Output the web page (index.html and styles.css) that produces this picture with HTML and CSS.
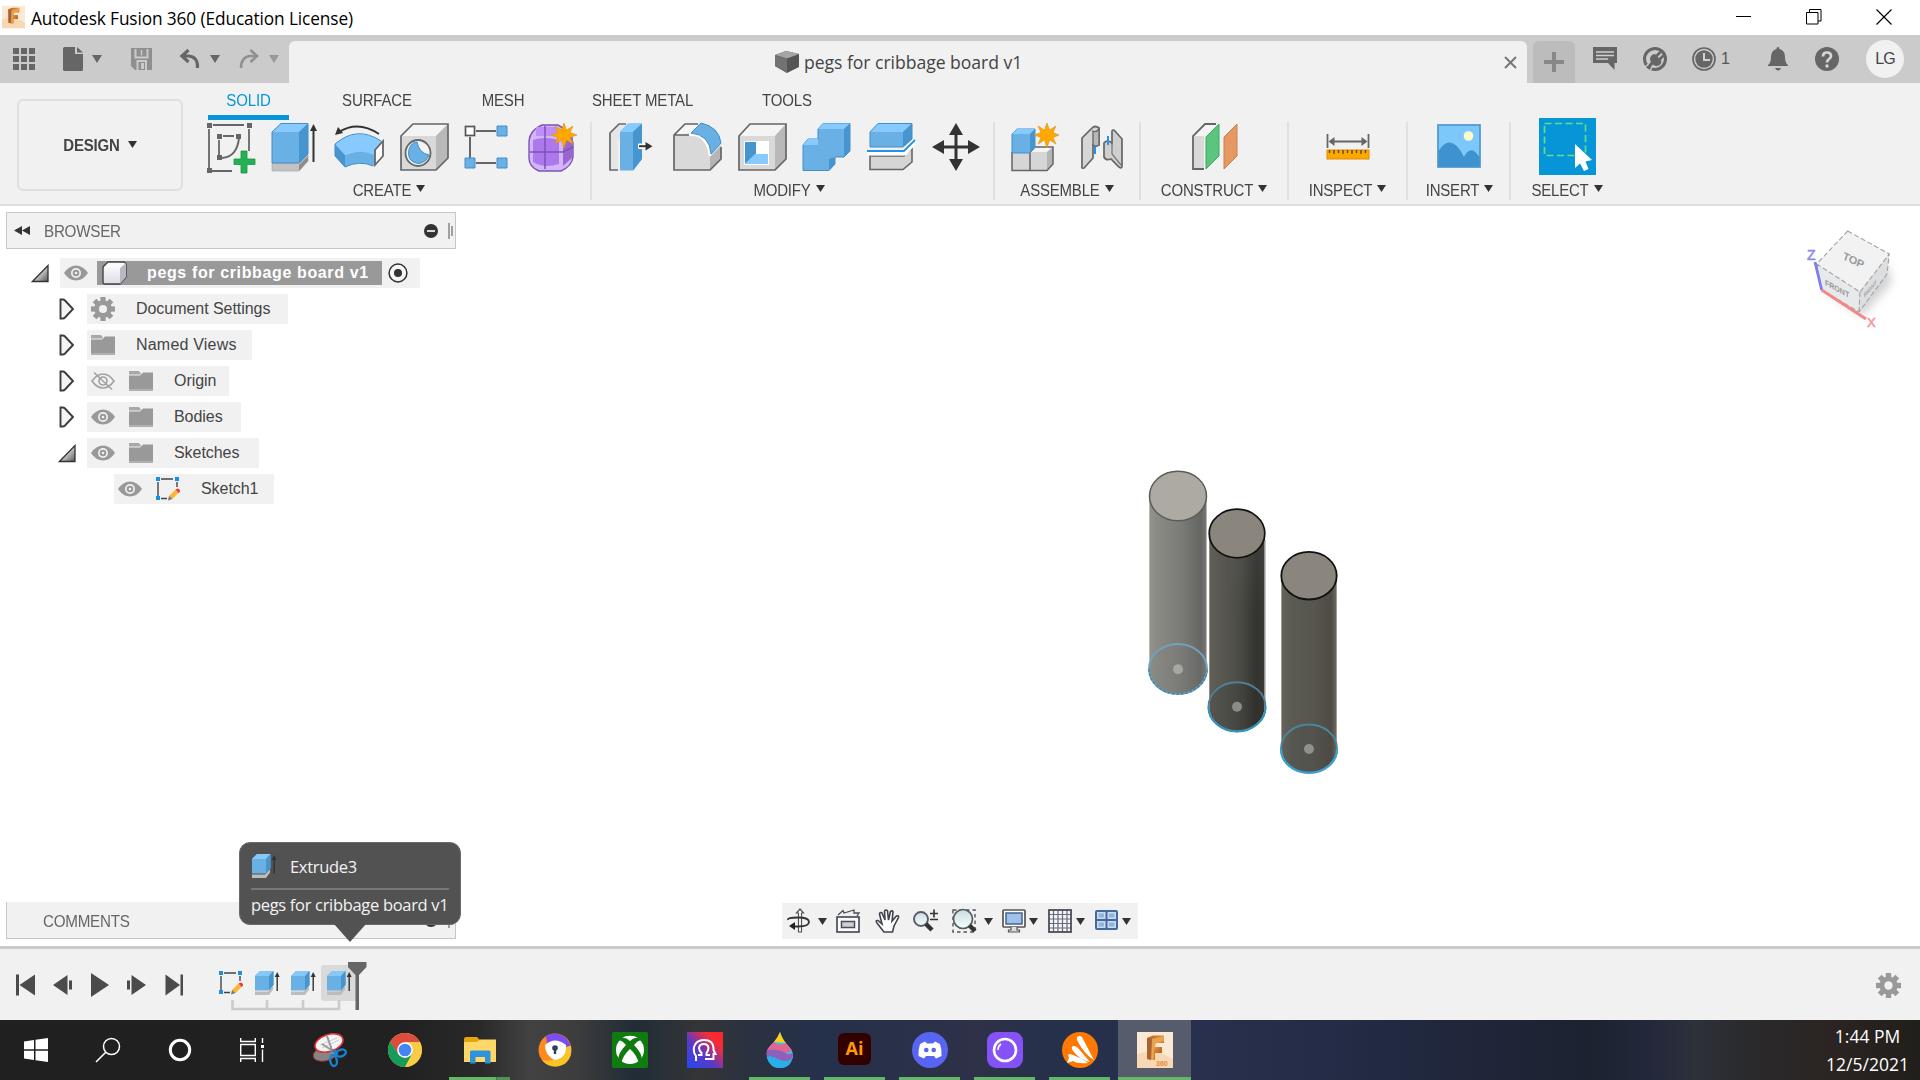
FILE: index.html
```html
<!DOCTYPE html>
<html lang="en">
<head>
<meta charset="utf-8">
<title>Autodesk Fusion 360 (Education License)</title>
<link rel="stylesheet" href="styles.css">
</head>
<body>
<svg class="defs" width="0" height="0" aria-hidden="true">
  <defs>
    <linearGradient id="g-tri" x1="0" y1="0" x2="1" y2="1"><stop offset=".3" stop-color="#f5f5f5"/><stop offset="1" stop-color="#555"/></linearGradient>
    <linearGradient id="g-cube" x1="0" y1="0" x2="0" y2="1"><stop offset="0" stop-color="#fff"/><stop offset="1" stop-color="#dddee4"/></linearGradient>
    <linearGradient id="g-lens" x1="0" y1="0" x2="0" y2="1"><stop offset="0" stop-color="#c9dde0"/><stop offset="1" stop-color="#f8fcfc"/></linearGradient>
    <linearGradient id="g-f" x1="0" y1="0" x2="1" y2="1"><stop offset="0" stop-color="#b4611f"/><stop offset=".5" stop-color="#e08a35"/><stop offset="1" stop-color="#8a4a1c"/></linearGradient>
  </defs>
  <symbol id="caret" viewBox="0 0 10 8" preserveAspectRatio="none"><path d="M0 0H10L5 8Z" fill="currentColor"/></symbol>
  <symbol id="eye" viewBox="0 0 24 16"><path d="M0 8Q5 .5 12 .5T24 8Q19 15.500 12 15.500T0 8Z" fill="#999"/><circle cx="12" cy="8" r="5" fill="#f1f1f1"/><circle cx="12" cy="8" r="3.300" fill="#999"/><circle cx="12" cy="8" r="1.300" fill="#f1f1f1"/></symbol>
  <symbol id="eye-off" viewBox="0 0 24 20"><g fill="none" stroke="#a3a3a3" stroke-width="1.700"><path d="M1 10Q6 3 12 3T23 10Q18 17 12 17T1 10Z"/><circle cx="12" cy="10" r="4"/><path d="M3 1.500L21 18.500"/></g></symbol>
  <symbol id="folder" viewBox="0 0 24 20"><path d="M0 4.500H11L14 1.500H24V18H0Z" fill="#999"/><path d="M0 0H10L12 2.500L11 3.500H0Z" fill="#a8a8a8"/><path d="M0 18H24V20H0Z" fill="#b0b0b0"/></symbol>
  <symbol id="closed" viewBox="0 0 16 22"><path d="M1.500 1.500H4Q5 1.500 6 2.500L14 11L6 19.500Q5 20.500 4 20.500H1.500Z" fill="#f4f4f4" stroke="#3c3c3c" stroke-width="1.900"/></symbol>
  <symbol id="opened" viewBox="0 0 18 19"><path d="M17 1.500V17.500H1.500Z" fill="url(#g-tri)" stroke="#333" stroke-width="1.300"/></symbol>
  <symbol id="gear" viewBox="-12 -12 24 24"><g fill="#999"><g id="teeth"><rect x="-2.600" y="-12" width="5.200" height="24"/><rect x="-12" y="-2.600" width="24" height="5.200"/></g><use href="#teeth" transform="rotate(45)"/><circle r="8.700"/></g><circle r="4" fill="#f1f1f1"/></symbol>
  <symbol id="sketch" viewBox="0 0 24 24"><g stroke="#444" stroke-width="1.400"><path d="M5 2H17M2 5V19M5 21.500H11M21 5V10"/></g><g fill="#1a8fe3"><path d="M0 0H4V4H0ZM19 0H23V4H19ZM0 19H4V23H0Z"/></g><path d="M13 19L19.500 12.500L23 15.500L16.500 22Z" fill="#fbb733"/><path d="M19.500 12.500L22 11.500Q24.500 12.500 24 14.500L22.500 16Z" fill="#ee3844"/><path d="M13 19L16.500 22L12 23.500Z" fill="#777"/></symbol>
  <symbol id="extr" viewBox="0 0 25 24"><path d="M0 20.500H13L18 15V18.500L14 24H0Z" fill="#bcbcbc"/><path d="M0 5L5 0H18.500V14L13.500 19.500H0Z" fill="#69b0e4"/><path d="M0 5L5 0H18.500L14 5Z" fill="#86c8f8"/><path d="M14 5L18.500 0V14L14 19.500Z" fill="#4795cf"/><path d="M22.200 4V20" stroke="#333" stroke-width="1.400"/><path d="M19.700 6L22.200 1L24.700 6Z" fill="#333"/></symbol>
  <symbol id="fusion" viewBox="0 0 36 36"><rect width="36" height="36" fill="#fbe9d6"/><path d="M0 22L18 18L36 27V36H0Z" fill="#f7cfa5" opacity=".7"/><path d="M10 6L16 3.500H27V11H18V15H25V21H18V28L10 27Z" fill="url(#g-f)"/><path d="M10 6L15 7V28L10 27Z" fill="#a8642c"/><path d="M15 7L27 4V9L19 11L17 18V28H14Z" fill="#e9a34f"/></symbol>
  <symbol id="minus" viewBox="-8 -8 16 16"><circle r="7" fill="#333"/><path d="M-4 0H4" stroke="#eee" stroke-width="1.800"/></symbol>
</svg>

<header class="titlebar">
  <svg class="app-logo" width="23" height="24" viewBox="0 0 36 36"><use href="#fusion"/></svg>
  <span class="app-title">Autodesk Fusion 360 (Education License)</span>
  <div class="win-buttons">
    <svg width="16" height="16"><path d="M0 7.500H15" stroke="#000"/></svg>
    <svg width="16" height="16"><path d="M.5 3.500H12V15H.5ZM3.500 3.500V.5H15V12H12" fill="none" stroke="#000"/></svg>
    <svg width="16" height="16"><path d="M.5 .5L15.500 15.500M15.500 .5L.5 15.500" stroke="#000" stroke-width="1.200"/></svg>
  </div>
</header>

<div class="tabbar">
  <div class="quick">
    <svg width="22" height="22"><path d="M0 0H6V6H0ZM8 0H14V6H8ZM16 0H22V6H16ZM0 8H6V14H0ZM8 8H14V14H8ZM16 8H22V14H16ZM0 16H6V22H0ZM8 16H14V22H8ZM16 16H22V22H16Z" fill="#666"/></svg>
    <svg class="q-file" width="20" height="24"><path d="M0 1.500Q0 0 1.500 0H12V7H20V22.500Q20 24 18.500 24H1.500Q0 24 0 22.500ZM14 0L20 5.500H14Z" fill="#666"/></svg>
    <svg class="caret q-c1"><use href="#caret"/></svg>
    <svg class="q-save" width="21" height="22"><path d="M0 0H21V22H4L0 18Z" fill="#8f8f8f"/><path d="M4.500 1V9.500H16.500V1M6.500 22V13H15V22" fill="none" stroke="#cbcbcb" stroke-width="2"/><path d="M10 15H13V21H10Z" fill="#cbcbcb"/><path d="M10.500 2V7.500" stroke="#cbcbcb" stroke-width="1.500"/></svg>
    <svg class="q-undo" width="20" height="20"><path d="M8.500 1L2 7L8.500 13M2.500 7H9Q18 8 17.500 19" fill="none" stroke="#666" stroke-width="3.200"/></svg>
    <svg class="caret q-c2"><use href="#caret"/></svg>
    <svg class="q-redo" width="20" height="20"><path d="M11.500 1L18 7L11.500 13M17.500 7H11Q2 8 2 19" fill="none" stroke="#909090" stroke-width="2.600"/></svg>
    <svg class="caret q-c3"><use href="#caret"/></svg>
  </div>
  <div class="doc-tab">
    <svg width="24" height="24"><path d="M0 5L11 1L24 4V17L12 23L0 16Z" fill="#555"/><path d="M0 5L11 1L24 4L12 8.500Z" fill="#a5a5a5"/><path d="M0 5L12 8.500V23L0 16Z" fill="#727272"/></svg>
    <span>pegs for cribbage board v1</span>
    <svg class="tab-close" width="13" height="13"><path d="M1 1L12 12M12 1L1 12" stroke="#777" stroke-width="2"/></svg>
  </div>
  <div class="new-tab"><svg width="20" height="20"><path d="M0 10H20M10 0V20" stroke="#888" stroke-width="4"/></svg></div>
  <div class="status">
    <svg width="24" height="24"><path d="M0 0H24V16H21.500V23L15 16H0Z" fill="#666"/><path d="M3 5H21M3 8.500H21M3 12H15" stroke="#d0d0d0" stroke-width="1.500"/></svg>
    <svg class="s-ext" width="24" height="24"><circle cx="12" cy="12" r="10.500" fill="none" stroke="#666" stroke-width="3"/><path d="M12 7L18.500 14Q18 18.500 14 19Q11.500 19 10 17.500L6 22L3.500 19.500L8 15Q6 12 8 9Q9.500 7 12 7Z" fill="#666"/><path d="M13.500 9L17.500 5M16.500 12.500L20.500 8.500" stroke="#666" stroke-width="2.600"/><path d="M5.500 17L1.500 20.500M9 20L7 24" stroke="#cbcbcb" stroke-width="1.500"/></svg>
    <svg class="s-clock" width="24" height="24"><circle cx="12" cy="12" r="11" fill="none" stroke="#666" stroke-width="1.700"/><circle cx="12" cy="12" r="8.700" fill="#666"/><path d="M12 6V13H18" fill="none" stroke="#d2d2d2" stroke-width="2"/></svg>
    <span class="jobs">1</span>
    <svg class="s-bell" width="20" height="24"><path d="M10 0Q11.500 0 11.500 2Q17 3.500 17 10Q17 16 20 18V19H0V18Q3 16 3 10Q3 3.500 8.500 2Q8.500 0 10 0ZM7 21H13Q12 23.500 10 23.500T7 21Z" fill="#666"/></svg>
    <svg class="s-help" width="24" height="24"><circle cx="12" cy="12" r="12" fill="#666"/><path d="M8 9.500Q8 5.500 12 5.500T16 9Q16 11 14 12.200T12 15.500" fill="none" stroke="#d6d6d6" stroke-width="2.700"/><circle cx="12" cy="19" r="1.700" fill="#d6d6d6"/></svg>
    <span class="avatar">LG</span>
  </div>
</div>

<section class="ribbon">
  <div class="workspace"><span class="tall">DESIGN</span> <svg class="caret"><use href="#caret"/></svg></div>
  <div class="ribbon-main">
    <nav class="tabs">
      <span class="tab active"><span class="tall">SOLID</span></span><span class="tab t-surface"><span class="tall">SURFACE</span></span><span class="tab t-mesh"><span class="tall">MESH</span></span><span class="tab t-sheet"><span class="tall">SHEET METAL</span></span><span class="tab t-tools"><span class="tall">TOOLS</span></span>
    </nav>
    <div class="groups">
      <div class="group g-create">
        <div class="tools">
          <svg class="tool"><path d="M6 2H37M2 6V45M5 48H25M42 6V28M16 13H27M12 17V32" fill="none" stroke="#666" stroke-width="1.800"/><path d="M32 15Q30 34 15 35" fill="none" stroke="#666" stroke-width="2"/><path d="M0 0H5V5H0ZM40 0H45V5H40ZM0 45H5V50H0ZM10 11H15V16H10ZM29 11H34V16H29ZM10 32H15V37H10Z" fill="#666"/><path d="M34 28H40V36H48V41.500H40V50H34V41.500H27V36H34Z" fill="#26b055" stroke="#189844" stroke-width=".8"/></svg>
          <svg class="tool"><path d="M1 40.500H28L37 32V38L28 48H1Z" fill="#c2c2c2" stroke="#aaa" stroke-width=".7"/><path d="M28 42L37 33V38L28 48Z" fill="#8d8d8d"/><path d="M1 9L10 .5H37V31L28 40H1Z" fill="#69b0e4"/><path d="M1 9L10 .5H37L28 9Z" fill="#86caff"/><path d="M28 9L37 .5V31L28 40Z" fill="#4795cf"/><path d="M1 9L10 .5H37V31L28 40H1Z" fill="none" stroke="#418fc8" stroke-width="1"/><path d="M42.500 5V39" stroke="#333" stroke-width="2"/><path d="M39 8L42.500 1L46 8Z" fill="#333"/></svg>
          <svg class="tool"><path d="M0 21Q22 2 48 19L39 33Q25 25 10 32Z" fill="#86caff"/><path d="M0 21L10 32V44L0 33Z" fill="#4795cf"/><path d="M10 32Q25 25 39 32V43Q25 37 10 44Z" fill="#69b0e4"/><path d="M0 21Q22 2 46 18M0 21V33L10 44Q25 37 38 43" fill="none" stroke="#418fc8"/><path d="M40 27L48 18V33L40 42Z" fill="#fff" stroke="#666" stroke-width="1.800"/><path d="M4 9Q23-3 44 11" fill="none" stroke="#333" stroke-width="2"/><path d="M0 12L3 4L8 10Z" fill="#333"/></svg>
          <svg class="tool"><path d="M1 13L13 1H48V35L36 47H1Z" fill="#d9d9d9"/><path d="M1 13L13 1H48L36 13Z" fill="#f4f4f4"/><path d="M36 13L48 1V35L36 47Z" fill="#b9b9b9"/><path d="M1 13L13 1H48V35L36 47H1Z" fill="none" stroke="#666" stroke-width="1.700"/><ellipse cx="18" cy="30" rx="12.500" ry="13" fill="#f4f4f4" stroke="#666" stroke-width="1.800"/><path d="M17 19Q19 30 29 32Q26 40 18 40.500Q8.500 39 8.500 30Q9 20 17 19Z" fill="#69b0e4" stroke="#418fc8"/></svg>
          <svg class="tool"><path d="M12 8H32M6 14V36M12 40H32" stroke="#666" stroke-width="2"/><rect x="1.500" y="3.500" width="9" height="9" fill="#fff" stroke="#555" stroke-width="1.700"/><path d="M33 3H43V13H33ZM1 35H11V45H1ZM33 35H43V45H33Z" fill="#69b0e4" stroke="#418fc8"/></svg>
          <svg class="tool"><path d="M1 18Q2 7 14 2H30Q42 8 45 20V34Q44 43 33 48H11Q1 44 1 35Z" fill="#d3b6f8" stroke="#7d52b8" stroke-width="1.400"/><path d="M8 4H29L36 13H8Z" fill="#c08ef7"/><path d="M5 17Q16 13 31 17V41Q16 46 5 39Z" fill="#ad78ec"/><path d="M35 19L45 14V34L35 43Z" fill="#9767cf"/><path d="M17 3V46M2 29H35L45 24" stroke="#7d52b8" stroke-width="1.500" fill="none"/><path d="M36 0L38.500 7L45 3L42 9.500L49 12L42 14.500L45 21L38.500 17L36 25L33.500 17L27 21L30 14.500L23 12L30 9.500L27 3L33.500 7Z" fill="#ffa800" stroke="#d99021" stroke-width=".6"/></svg>
        </div>
        <div class="label"><span class="tall">CREATE</span> <svg class="caret"><use href="#caret"/></svg></div>
      </div>
      <div class="group g-modify">
        <div class="tools">
          <svg class="tool"><path d="M2 10L10 2H18V10L10 18V46H2Z" fill="#e6e6e6"/><path d="M18 1H11L2 10V47H10" fill="none" stroke="#666" stroke-width="1.700"/><path d="M12 9L20 .5H34V36L25 47.500H12Z" fill="#69b0e4"/><path d="M12 9L20 .5H34L25 9Z" fill="#86caff"/><path d="M25 9L34 .5V36L25 47.500Z" fill="#4795cf"/><rect x="30" y="20.500" width="10" height="5.500" rx="1" fill="#fff"/><path d="M31 23.200H39" stroke="#333" stroke-width="2"/><path d="M37.500 19L44.500 23.200L37.500 27.500Z" fill="#333"/></svg>
          <svg class="tool"><path d="M1 12L12 1H30Q47 8 48 25V36L37 47H1Z" fill="#d9d9d9"/><path d="M2 12L12 1.500H28L20 10Z" fill="#f6f6f6"/><path d="M37 34L48 23V36L37 47Z" fill="#b5b5b5"/><path d="M25 1H12L1 12V47H37L48 36V24M2 12H17" fill="none" stroke="#666" stroke-width="1.700"/><path d="M16 12Q34 10 37 33" stroke="#fff" stroke-width="2.500" fill="none"/><path d="M18 10L28 0Q46 4 48 20L38 31Q37 12 18 10Z" fill="#69b0e4" stroke="#418fc8"/></svg>
          <svg class="tool"><path d="M1 13L12 1H48V36L37 47H1Z" fill="#d9d9d9"/><path d="M1 13L12 1H48L37 13Z" fill="#f4f4f4"/><path d="M37 13L48 1V36L37 47Z" fill="#b9b9b9"/><path d="M1 13L12 1H48V36L37 47H1Z" fill="none" stroke="#666" stroke-width="1.700"/><path d="M6 18H31V42H6Z" fill="#fff"/><path d="M7 19H18V31L7 41Z" fill="#4795cf"/><path d="M7 41L17 31H30V41Z" fill="#86caff"/></svg>
          <svg class="tool"><path d="M1 22L6 16H16V6L21 .5H48V28L42 34H33V41L27 47.500H1Z" fill="#69b0e4" stroke="#418fc8"/><path d="M16 6L21 .5H48L42 6ZM1 22L6 16H16V22Z" fill="#86caff"/><path d="M42 6L48 .5V28L42 34ZM27 36L33 34V41L27 47.500Z" fill="#4795cf"/></svg>
          <svg class="tool"><path d="M3 33H37L45 25V39L36 46.500H3Z" fill="#d5d5d5" stroke="#666" stroke-width="1.600"/><path d="M0 30H38L48 18" fill="none" stroke="#fff" stroke-width="5"/><path d="M0 28H37L48 17" fill="none" stroke="#2293ee" stroke-width="1.800"/><path d="M3 9L11 .5H45V16L36 24H3Z" fill="#69b0e4"/><path d="M3 9L11 .5H45L36 9Z" fill="#86caff"/><path d="M36 9L45 .5V16L36 24Z" fill="#4795cf"/><path d="M3 9L11 .5H45V16L36 24H3Z" fill="none" stroke="#418fc8"/></svg>
          <svg class="tool"><path d="M24 8V40M8 24H40" stroke="#333" stroke-width="3"/><path d="M24 0L31 12H17ZM24 48L31 36H17ZM0 24L12 17V31ZM48 24L36 17V31Z" fill="#333"/></svg>
        </div>
        <div class="label"><span class="tall">MODIFY</span> <svg class="caret"><use href="#caret"/></svg></div>
      </div>
      <div class="group g-assemble">
        <div class="tools">
          <svg class="tool"><path d="M1 29H36L42 24V41L36 47.500H1Z" fill="#d6d6d6"/><path d="M19 29L24 24H42L36 29Z" fill="#f4f4f4"/><path d="M36 29L42 24V41L36 47.500Z" fill="#b5b5b5"/><path d="M19 29L24 24H42V41L36 47.500H1V29M19 29V47" fill="none" stroke="#666" stroke-width="1.500"/><path d="M1 11L6 6H24V24L19 30H1Z" fill="#69b0e4" stroke="#418fc8"/><path d="M1 11L6 6H24L19 11Z" fill="#86caff"/><path d="M19 11L24 6V24L19 30Z" fill="#4795cf"/><path d="M36 0L38.500 7L45 3L42 9.500L48 12L42 14.500L45 21L38.500 17L36 25L33.500 17L27 21L30 14.500L23 12L30 9.500L27 3L33.500 7Z" fill="#ffa800" stroke="#d99021" stroke-width=".6"/></svg>
          <svg class="tool"><path d="M5 15L15 5Q18 2 22 5V22Q19 24 16 22V35L7 45Q4 46 5 43Z" fill="#d6d6d6" stroke="#666" stroke-width="1.700"/><path d="M16 8Q19 10 22 6V22Q19 24 16 22Z" fill="#b8b8b8" stroke="#666" stroke-width="1.300"/><path d="M35 8Q36 6 38 8L45 16V43Q45 46 42 44L34 36Q29 38 27 34V20Q30 16 35 20Z" fill="#cfcfcf" stroke="#666" stroke-width="1.700"/><path d="M35 9V31L44 42" stroke="#777" fill="none" stroke-width="1.200"/><path d="M18 23V31M31 13V22" stroke="#2293ee" stroke-width="2"/></svg>
        </div>
        <div class="label"><span class="tall">ASSEMBLE</span> <svg class="caret"><use href="#caret"/></svg></div>
      </div>
      <div class="group g-construct">
        <div class="tools">
          <svg class="tool"><path d="M2 13L15 1H26L13 13V46H2Z" fill="#f4f4f4"/><path d="M2 13H13V46H2Z" fill="#d9d9d9"/><path d="M25 1H14L2 13V46H13" fill="none" stroke="#666" stroke-width="1.800"/><path d="M15 14L28 1V33L15 46Z" fill="#5ac57e" stroke="#3da863"/><path d="M33 14L46 1V33L33 46Z" fill="#e69862" stroke="#cc8049"/></svg>
        </div>
        <div class="label"><span class="tall">CONSTRUCT</span> <svg class="caret"><use href="#caret"/></svg></div>
      </div>
      <div class="group g-inspect">
        <div class="tools">
          <svg class="tool"><path d="M3.500 11V25M44.500 11V25M8 18.500H40" stroke="#666" stroke-width="1.800"/><path d="M4.500 18.500L10.500 14V23ZM43.500 18.500L37.500 14V23Z" fill="#666"/><rect x="3" y="27" width="42" height="9" fill="#ffa800" stroke="#dd8e00"/><path d="M5.500 27V30M10 27V31M14.500 27V30M19 27V31M23.500 27V30M28 27V31M32.500 27V30M37 27V31M41.500 27V30" stroke="#5d4824" stroke-width="1.400"/></svg>
        </div>
        <div class="label"><span class="tall">INSPECT</span> <svg class="caret"><use href="#caret"/></svg></div>
      </div>
      <div class="group g-insert">
        <div class="tools">
          <svg class="tool"><rect x="3" y="2" width="42" height="42" fill="#7dc7fb"/><path d="M3 29Q16 8 29 34Q36 20 45 35V44H3Z" fill="#3c93cf"/><rect x="3" y="2" width="42" height="42" fill="none" stroke="#4c97cc" stroke-width="1.700"/><circle cx="33.500" cy="13" r="4.800" fill="#fefcc8"/></svg>
        </div>
        <div class="label"><span class="tall">INSERT</span> <svg class="caret"><use href="#caret"/></svg></div>
      </div>
      <div class="group g-select">
        <div class="tools">
          <svg class="tool select"><rect width="57" height="57" fill="#0696d7"/><rect x="5.500" y="5.500" width="41" height="32" fill="none" stroke="#62dc86" stroke-width="1.700" stroke-dasharray="7 3.500"/><path d="M36 26V50L41 45.500L45 53L49.500 51L46.500 43.500L53 42Z" fill="#fff"/></svg>
        </div>
        <div class="label"><span class="tall">SELECT</span> <svg class="caret"><use href="#caret"/></svg></div>
      </div>
    </div>
  </div>
</section>

<main class="viewport">
  <svg class="model" width="180" height="320" viewBox="1140 460 180 320">
    <defs>
      <linearGradient id="c1"><stop offset="0" stop-color="#93928c"/><stop offset=".12" stop-color="#8b8b86"/><stop offset=".55" stop-color="#7b7b77"/><stop offset=".9" stop-color="#656562"/><stop offset="1" stop-color="#777"/></linearGradient>
      <linearGradient id="c2"><stop offset="0" stop-color="#5f5e57"/><stop offset=".3" stop-color="#56564f"/><stop offset=".6" stop-color="#484843"/><stop offset=".85" stop-color="#33332f"/><stop offset="1" stop-color="#3a3934"/></linearGradient>
      <linearGradient id="c3"><stop offset="0" stop-color="#65645a"/><stop offset=".2" stop-color="#5a5a53"/><stop offset=".6" stop-color="#56554e"/><stop offset=".9" stop-color="#4f4b44"/><stop offset="1" stop-color="#6f6a60"/></linearGradient>
      <linearGradient id="fade" x1="0" y1="0" x2="0" y2="1"><stop offset="0" stop-color="#777" stop-opacity=".5"/><stop offset="1" stop-color="#777" stop-opacity="0"/></linearGradient>
    </defs>
    <g><path d="M1149.500 496V669A28.500 25 0 0 0 1206.500 669V496Z" fill="url(#c1)"/><path d="M1149.500 496V660M1206.500 496V660" stroke="#b9b8b2"/>
      <ellipse cx="1178" cy="496" rx="28.500" ry="24.800" fill="#acaaa2" stroke="#5b5b59" stroke-width="1.500"/>
      <ellipse cx="1178" cy="669" rx="29" ry="25" fill="#777" fill-opacity=".2" stroke="#6fa3bd" stroke-width="1.900"/><path d="M1149 669A29 25 0 0 0 1207 669" fill="none" stroke="#3f87aa" stroke-width="1.500" stroke-dasharray="3 1.500"/><circle cx="1178" cy="669.300" r="5" fill="#a6a6a4"/></g>
    <g><path d="M1209.500 533.500V707A27.500 24.500 0 0 0 1264.500 707V533.500Z" fill="url(#c2)"/><path d="M1209.500 540V700M1265 540V700" stroke="#8f8d85"/><path d="M1230 533H1264V610H1230Z" fill="url(#fade)" opacity=".3"/>
      <ellipse cx="1237" cy="533.500" rx="27.800" ry="24.300" fill="#8a857d" stroke="#111" stroke-width="1.700"/>
      <ellipse cx="1237" cy="706.700" rx="28.500" ry="24.500" fill="#222" fill-opacity=".15" stroke="#4f8099" stroke-width="1.900"/><path d="M1208.500 707A28.500 24.500 0 0 0 1265.500 707" fill="none" stroke="#3793bd" stroke-width="2"/><circle cx="1237" cy="706.700" r="5" fill="#8b8b89"/></g>
    <g><path d="M1281.500 576V748.500A27.500 24 0 0 0 1336.500 748.500V576Z" fill="url(#c3)"/><path d="M1281.500 582V740M1336.500 582V740" stroke="#a09d93"/>
      <ellipse cx="1309" cy="575.700" rx="27.700" ry="23.800" fill="#8a857d" stroke="#111" stroke-width="1.800"/>
      <ellipse cx="1309" cy="748.500" rx="28" ry="24" fill="#444" fill-opacity=".15" stroke="#4d859f" stroke-width="1.900"/><path d="M1281 749A28 24 0 0 0 1337 749" fill="none" stroke="#3aa0d0" stroke-width="2.200"/><circle cx="1309" cy="749" r="5" fill="#8f8f8c"/></g>
  </svg>

  <svg class="viewcube" width="110" height="110" viewBox="1795 225 110 110">
    <defs><filter id="soft" x="-30%" y="-30%" width="160%" height="160%"><feGaussianBlur stdDeviation="5"/></filter></defs>
    <path d="M1825 290L1862 316L1892 282L1886 264Z" fill="#999" opacity=".45" filter="url(#soft)"/>
    <path d="M1847.700 231L1889.300 254L1860 292L1816.700 264Z" fill="#f2f2f3"/>
    <path d="M1816.700 264L1860 292L1859 312L1821.700 290Z" fill="#e8e9ea"/>
    <path d="M1860 292L1889.300 254L1887 274L1859 312Z" fill="#dddedf"/>
    <path d="M1847.700 231L1889.300 254L1860 292L1816.700 264ZM1816.700 264L1821.700 290L1859 312L1887 274L1889.300 254M1860 292L1859 312" fill="none" stroke="#a0a3a5" stroke-width="1.100" stroke-dasharray="5 2.500"/>
    <path d="M1815 262L1821.700 290" stroke="#7e7cf0" stroke-width="2.800"/>
    <path d="M1821.700 290L1866 319" stroke="#f08a8a" stroke-width="3"/>
    <text class="cube-top" transform="matrix(.88 .42 -.3 .9 1842 259)">TOP</text>
    <text class="cube-front" transform="matrix(.88 .48 0 1 1825 285)">FRONT</text>
    <text class="cube-right" transform="matrix(.62 -.7 0 1 1864 298)">RIGHT</text>
    <text class="axis-z" x="1807" y="260">Z</text>
    <text class="axis-x" x="1867" y="327">X</text>
  </svg>

  <aside class="side">
    <div class="panel">
      <svg width="16" height="9"><path d="M0 4.500L8 0V9ZM8 4.500L16 0V9Z" fill="#333"/></svg>
      <span class="panel-title tall">BROWSER</span>
      <svg class="panel-minus" width="16" height="16"><use href="#minus"/></svg>
      <svg class="grip" width="5" height="16"><path d="M1 0V16M4 3V13" stroke="#777" stroke-width="1.300"/></svg>
    </div>
    <div class="tree">
      <div class="row r1"><svg width="18" height="19"><use href="#opened"/></svg>
        <div class="node root"><svg width="24" height="16"><use href="#eye"/></svg>
          <div class="selected"><svg width="25" height="25"><path d="M1 7Q1 5 3 4L6 1H22L24 3V16L18 23H3Q1 23 1 21Z" fill="url(#g-cube)" stroke="#444" stroke-width="1.400"/><path d="M18 7L24 2V16L18 23Z" fill="#b8b9c2"/><path d="M2 7L7 2H23L18 7Z" fill="#fafafa"/></svg><span>pegs for cribbage board v1</span></div>
          <svg width="20" height="20"><circle cx="10" cy="10" r="8.900" fill="#f7f7f7" stroke="#333" stroke-width="1.500"/><circle cx="10" cy="10" r="4" fill="#333"/></svg></div></div>
      <div class="row r2"><svg width="16" height="22"><use href="#closed"/></svg><div class="node n-doc"><svg width="24" height="24"><use href="#gear"/></svg><span>Document Settings</span></div></div>
      <div class="row r2"><svg width="16" height="22"><use href="#closed"/></svg><div class="node n-views"><svg width="24" height="20"><use href="#folder"/></svg><span>Named Views</span></div></div>
      <div class="row r2"><svg width="16" height="22"><use href="#closed"/></svg><div class="node n-origin"><svg width="24" height="20"><use href="#eye-off"/></svg><svg class="second" width="24" height="20"><use href="#folder"/></svg><span>Origin</span></div></div>
      <div class="row r2"><svg width="16" height="22"><use href="#closed"/></svg><div class="node n-bodies"><svg width="24" height="16"><use href="#eye"/></svg><svg class="second" width="24" height="20"><use href="#folder"/></svg><span>Bodies</span></div></div>
      <div class="row r6"><svg width="18" height="19"><use href="#opened"/></svg><div class="node n-sketches"><svg width="24" height="16"><use href="#eye"/></svg><svg class="second" width="24" height="20"><use href="#folder"/></svg><span>Sketches</span></div></div>
      <div class="row r7"><div class="node n-sketch"><svg width="24" height="16"><use href="#eye"/></svg><svg class="second" width="24" height="24"><use href="#sketch"/></svg><span>Sketch1</span></div></div>
    </div>
    <div class="panel comments">
      <span class="panel-title tall">COMMENTS</span>
      <svg class="panel-minus" width="16" height="16"><use href="#minus"/></svg>
      <svg class="grip" width="5" height="16"><path d="M1 0V16M4 3V13" stroke="#777" stroke-width="1.300"/></svg>
    </div>
  </aside>

  <div class="navbar">
    <svg width="24" height="24"><path d="M10.500 4L14 0L17.500 4H15.500V23H12.500V4Z" fill="#fff" stroke="#555" stroke-width="1.200"/><path d="M2 11Q1 8.500 12 8.500Q23 8.500 23 13T12 17.500H6" fill="none" stroke="#333" stroke-width="1.800"/><path d="M3 17L9 13V21Z" fill="#222"/></svg>
    <svg class="caret c-orbit"><use href="#caret"/></svg>
    <svg class="i-look" width="24" height="24"><rect x="1" y="8" width="22" height="15" fill="#fafafa" stroke="#4a4d59" stroke-width="1.700"/><rect x="5.500" y="12.500" width="13" height="6" fill="#ccd0d4" stroke="#4a4d59" stroke-width="1.500"/><path d="M2 6L7 1.500L8 4L18 1V4H23L21 7" fill="#eee" stroke="#4a4d59" stroke-width="1.300"/></svg>
    <svg class="i-hand" width="24" height="24"><path d="M9 23L2 14Q0 11 3 11.500L7 15L4.500 5Q5 2.500 7 4L10 11L9.500 2Q11 0 12.500 2L13.500 11L15.500 2.500Q17.500 1 18 3L17 12L21.500 7Q24 6 23.500 8.500L19 17L17.500 23Z" fill="#fff" stroke="#40424c" stroke-width="1.600"/></svg>
    <svg class="i-zoom" width="25" height="24"><circle cx="8" cy="10" r="7" fill="url(#g-lens)" stroke="#555b66" stroke-width="1.900"/><path d="M13 15L19 21" stroke="#333" stroke-width="4.500"/><path d="M17 4.500H25M21 .5V8.500M17 10.500H25" stroke="#333" stroke-width="1.600"/></svg>
    <svg class="i-fit" width="25" height="24"><rect x="1" y="1" width="22" height="22" fill="none" stroke="#555" stroke-width="1.400" stroke-dasharray="3.500 3"/><circle cx="11" cy="10" r="9.500" fill="url(#g-lens)" stroke="#555b66" stroke-width="1.700"/><path d="M17.500 16.500L23 22" stroke="#333" stroke-width="4.500"/></svg>
    <svg class="caret c-fit"><use href="#caret"/></svg>
    <svg class="i-display" width="24" height="24"><rect x="1" y="1" width="22" height="17" rx="1" fill="#fff" stroke="#555" stroke-width="1.700"/><rect x="4" y="4" width="16" height="11" fill="#9ec0ea" stroke="#44628f" stroke-width="1.500"/><path d="M9 18V21H6.500V23H17.500V21H15V18" fill="#ddd" stroke="#555" stroke-width="1.200"/></svg>
    <svg class="caret c-display"><use href="#caret"/></svg>
    <svg class="i-grid" width="24" height="24"><rect x="1" y="1" width="22" height="22" fill="#f4f6fa"/><path d="M5.500 1V23M10 1V23M14.500 1V23M19 1V23M1 5.500H23M1 10H23M1 14.500H23M1 19H23" stroke="#686b78" stroke-width="1.200"/><rect x="1" y="1" width="22" height="22" fill="none" stroke="#4d4d55" stroke-width="1.800"/></svg>
    <svg class="caret c-grid"><use href="#caret"/></svg>
    <svg class="i-views" width="23" height="20"><rect width="23" height="20" rx="2" fill="#476797"/><path d="M2 2H10.500V9H2ZM12.500 2H21V9H12.500ZM2 11H10.500V18H2ZM12.500 11H21V18H12.500Z" fill="#c8daf4"/><path d="M3.500 3.500H9V7.500H3.500ZM14 3.500H19.500V7.500H14ZM3.500 12.500H9V16.500H3.500ZM14 12.500H19.500V16.500H14Z" fill="#8fb4e4"/></svg>
    <svg class="caret c-views"><use href="#caret"/></svg>
  </div>

  <div class="tooltip">
    <div class="tip-head"><svg width="25" height="24"><use href="#extr"/></svg><span>Extrude3</span></div>
    <div class="tip-body">pegs for cribbage board v1</div>
    <svg class="tip-arrow" width="32" height="18"><path d="M0 0H32L16 18Z" fill="#525252"/></svg>
  </div>
</main>

<footer class="timeline">
  <div class="play">
    <svg width="20" height="24"><path d="M0 1.500H3V22.500H0ZM19 1.500V22.500L3.500 12Z" fill="#4b4b4b"/></svg>
    <svg width="20" height="24"><path d="M0 12L14.500 2V22ZM16 7.500H19V16.500H16Z" fill="#4b4b4b"/></svg>
    <svg width="20" height="24"><path d="M1 0L19 12L1 24Z" fill="#4b4b4b"/></svg>
    <svg width="20" height="24"><path d="M0 7.500H3V16.500H0ZM4.500 2L19 12L4.500 22Z" fill="#4b4b4b"/></svg>
    <svg width="20" height="24"><path d="M1.500 1.500L16 12L1.500 22.500ZM16.500 1.500H19V22.500H16.500Z" fill="#4b4b4b"/></svg>
  </div>
  <div class="features">
    <span class="feat"><svg width="24" height="24"><use href="#sketch"/></svg></span>
    <span class="feat"><svg width="25" height="24"><use href="#extr"/></svg></span>
    <span class="feat"><svg width="25" height="24"><use href="#extr"/></svg></span>
    <span class="feat current"><svg width="25" height="24"><use href="#extr"/></svg></span>
    <svg class="links" width="110" height="11"><path d="M1.500 0V9H108V0M36 0V9M72 0V9" fill="none" stroke="#cbcbcb" stroke-width="2.600"/></svg>
    <svg class="marker" width="19" height="48"><path d="M0 0H18.500V5L11 13V48H7.500V13L0 5Z" fill="#666"/></svg>
  </div>
  <svg class="settings" width="25" height="25"><use href="#gear"/></svg>
</footer>

<div class="taskbar">
  <div class="sys"><svg width="24" height="24"><path d="M0 3.500L10 2V11.300H0ZM11.500 1.800L24 0V11.300H11.500ZM0 12.700H10V22L0 20.500ZM11.500 12.700H24V24L11.500 22.200Z" fill="#fff"/></svg></div>
  <div class="sys"><svg width="24" height="24"><circle cx="15.500" cy="8.500" r="8" fill="none" stroke="#fff" stroke-width="1.500"/><path d="M9.500 14.500L0 24" stroke="#fff" stroke-width="1.600"/></svg></div>
  <div class="sys"><svg width="24" height="24"><circle cx="12" cy="12" r="9.700" fill="none" stroke="#fff" stroke-width="3"/></svg></div>
  <div class="sys"><svg width="24" height="24"><path d="M.7 0V3.500H15.300V0M.7 6.500H15.300V17.500H.7ZM.7 24V20.500H15.300V24M22.500 0V5M22.500 11.500V24" fill="none" stroke="#fff" stroke-width="1.400"/><path d="M21 7H24V10H21Z" fill="#fff"/></svg></div>
  <div class="app"><svg width="36" height="36"><ellipse cx="13" cy="22" rx="12" ry="7" fill="#858585" stroke="#a12d33" transform="rotate(-12 13 22)"/><ellipse cx="17" cy="11" rx="14.500" ry="8.500" fill="#f5f5f5" stroke="#e02f35" stroke-width="1.600" transform="rotate(-18 17 11)"/><path d="M8 13L25 6M10 16L27 8" stroke="#ccc"/><path d="M15 4L21 21M10 12L24 21" stroke="#999" stroke-width="2"/><ellipse cx="29" cy="21" rx="5" ry="3.300" transform="rotate(-20 29 21)" fill="none" stroke="#1684d0" stroke-width="2.400"/><ellipse cx="21.500" cy="28.500" rx="3.300" ry="5.500" transform="rotate(-10 21.500 28.500)" fill="none" stroke="#1684d0" stroke-width="2.400"/><path d="M20 18L26 22" stroke="#1684d0" stroke-width="2.500"/></svg></div>
  <div class="app"><svg width="34" height="34" viewBox="-17 -17 34 34"><circle r="17" fill="#f9cc45"/><path d="M-14.700-8.500A17 17 0 0 1 14.700-8.500L15-8H0L-7.500 4Z" fill="#dc4c3f"/><path d="M-14.700-8.500A17 17 0 0 0 0 17L7.500 4L0 8L-7 4Z" fill="#179b5a"/><path d="M0-8H14.900A17 17 0 0 1 0 17L7 4Z" fill="#f9cc45"/><circle r="7.800" fill="#fff"/><circle r="6.300" fill="#4285f4"/></svg></div>
  <div class="app open multi"><svg width="34" height="28"><path d="M1 3Q1 1 3 1H14L17 4H33V26H1Z" fill="#e5a50f"/><path d="M1 6H14L17 3.500H33V25Q33 26 32 26H2Q1 26 1 25Z" fill="#ffd867"/><path d="M7 16Q7 14.500 8.500 14.500H26Q27.500 14.500 27.500 16V27.500H22V21H12.500V27.500H7Z" fill="#2f92dc"/></svg></div>
  <div class="app"><svg width="34" height="34"><circle cx="17" cy="17" r="16.500" fill="#ff8a1c"/><path d="M8 3Q18-3 28 5Q35 13 33 21L23 12L9 11Z" fill="#7c4df0"/><path d="M33 21Q30 33 17 33.500Q9 33 4 27Q17 30 22 20Q28 12 33 13Z" fill="#f7c325"/><path d="M7 12Q17 3 28 12Q29 25 17 27Q7 23 7 12Z" fill="#fff"/><circle cx="17" cy="15" r="2.800" fill="#303c60"/><path d="M15.800 16H18.200V21H15.800Z" fill="#303c60"/></svg></div>
  <div class="app"><svg width="36" height="36"><rect width="36" height="36" rx="2" fill="#107c10"/><circle cx="18" cy="18" r="14" fill="#fff"/><path d="M9 6Q14 5 18 9Q22 5 27 6L29 8Q25 9 22 13Q30 21 30 28L27 32Q25 23 18 17Q11 23 9 32L6 28Q6 21 14 13Q11 9 7 8Z" fill="#107c10"/><path d="M10 5.500Q18 2 26 5.500Q21 5 18 7.500Q15 5 10 5.500Z" fill="#fff"/></svg></div>
  <div class="app"><svg width="36" height="36"><defs><linearGradient id="ir" x1="0" y1="1" x2="1" y2="0"><stop offset="0" stop-color="#2448f5"/><stop offset=".4" stop-color="#553ac8"/><stop offset=".75" stop-color="#f42c39"/><stop offset="1" stop-color="#ff2525"/></linearGradient></defs><rect width="36" height="36" fill="url(#ir)"/><path d="M9 29V24Q6 20 7 15Q9 8 17 8Q26 8 26.500 16V18L28.500 22H26.500V27H18" fill="none" stroke="#fff" stroke-width="2"/><path d="M11 23H14.500V21Q12 18.500 12 16Q12.500 12 16.800 12T21.500 16Q21.500 18.500 19.500 21V23H23" fill="none" stroke="#fff" stroke-width="2"/></svg></div>
  <div class="app open"><svg width="36" height="36"><path d="M18 0Q21 9 28 16Q33 22 30 28Q27 36 18 36Q8 36 5 26Q3 19 11 11Q16 6 18 0Z" fill="#45b9ef"/><path d="M18 0Q20 7 24 11L12 10Q16 5 18 0Z" fill="#ffd018"/><path d="M12 10Q17 15 24 11Q29 17 30 18Q22 25 5 18Q7 14 12 10Z" fill="#df6792"/><path d="M5 18Q18 17 23 21Q28 24 31 20Q31 24 30 27Q22 32 13 26Q8 24 5 25Q4 21 5 18Z" fill="#8d60bc"/><path d="M5 25Q10 23 15 27Q23 31 30 27Q27 36 18 36Q7 35 5 25Z" fill="#28aee8"/></svg></div>
  <div class="app open"><span class="ai">Ai</span></div>
  <div class="app open"><svg width="36" height="36"><circle cx="18" cy="18" r="18" fill="#5865f2"/><path d="M13 9.500L15 11.500H21L23 9.500L28 12Q30 18 29.500 24L24 26.500L22 24H14L12 26.500L6.500 24Q6 18 8 12Z" fill="#fff"/><circle cx="14.300" cy="18" r="2.300" fill="#5865f2"/><circle cx="21.700" cy="18" r="2.300" fill="#5865f2"/></svg></div>
  <div class="app open"><svg width="36" height="36"><rect width="36" height="36" rx="9" fill="#8452f8"/><circle cx="18" cy="18" r="11" fill="none" stroke="#fff" stroke-width="2.600"/><path d="M11 18Q11 14 14 12" fill="none" stroke="#fff" stroke-width="1.600"/></svg></div>
  <div class="app open"><svg width="36" height="36"><circle cx="18" cy="18" r="18" fill="#ff7800"/><path d="M15 8Q14 4 17.500 4Q20 4 21 7L32 28Q22 22 15 8ZM11 19Q8 14 12 14Q14 14 16 16L28 30Q18 28 11 19ZM7 26Q5 22 8 22Q18 25 26 31Q15 32 11 29L5 31Z" fill="#fff"/></svg></div>
  <div class="app open focused"><svg width="36" height="36" viewBox="0 0 36 36"><use href="#fusion"/><text class="f360" x="19" y="33.500">360</text></svg></div>
  <div class="clock"><span class="time">1:44 PM</span><span class="date">12/5/2021</span></div>
</div>
</body>
</html>
```
FILE: styles.css
```css
* { box-sizing: border-box; }
html, body { margin: 0; height: 100%; }
body {
  width: 1920px;
  height: 1080px;
  display: flex;
  flex-direction: column;
  overflow: hidden;
  background: #fff;
  color: #444;
  font: 15px "Liberation Sans", Arial, sans-serif;
  white-space: nowrap;
}
svg { display: block; flex: none; overflow: visible; }
.defs { position: absolute; }
.caret { width: 10px; height: 8px; color: #333; }
/* condensed capitals used by the ribbon and panel headings */
.tall { display: inline-block; transform: scaleY(1.1); }

/* title bar */
.titlebar { height: 35px; display: flex; align-items: center; padding: 0 28px 2px 2px; flex: none; }
.app-title { margin: 4px 0 0 6px; color: #000; font: 17.300px "Open Sans", "Noto Sans", sans-serif; letter-spacing: -.12px; }
.win-buttons { margin-left: auto; display: flex; gap: 54px; }

/* document tabs */
.tabbar { height: 48px; flex: none; display: flex; align-items: flex-end; background: #cbcbcb; }
.quick { width: 289px; height: 48px; display: flex; align-items: center; padding-left: 13px; }
.quick .caret { color: #666; margin-top: -1px; }
.q-file { margin-left: 28px; }
.q-c1 { margin-left: 9px; }
.q-save { margin-left: 29px; }
.q-undo { margin-left: 28px; }
.q-c2 { margin-left: 10px; }
.q-redo { margin-left: 19px; }
.quick .q-c3 { margin-left: 10px; color: #999; }
.doc-tab {
  width: 1238px; height: 42px; padding: 0 10px 0 486px;
  display: flex; align-items: center;
  background: #f1f1f1; border-radius: 6px 6px 0 0;
}
.doc-tab span { margin-left: 5px; color: #444; font: 17.600px "Open Sans", "Noto Sans", sans-serif; letter-spacing: -.04px; }
.tab-close { margin-left: auto; }
.new-tab { width: 42px; height: 42px; margin-left: 6px; display: flex; align-items: center; justify-content: center; background: #bcbcbc; border-radius: 6px 6px 0 0; }
.new-tab svg { margin-top: -1px; }
.status { height: 48px; display: flex; align-items: center; margin-left: 18px; }
.s-ext { margin-left: 26px; }
.s-clock { margin-left: 25px; }
.jobs { width: 8px; margin-left: 5px; font-size: 16px; color: #555; }
.s-bell { margin-left: 39px; }
.s-help { margin-left: 27px; }
.avatar { width: 38px; height: 38px; margin-left: 27px; border-radius: 50%; background: #f1f1f1; text-align: center; line-height: 38px; font-size: 16px; letter-spacing: -1px; }

/* ribbon */
.ribbon { height: 123px; flex: none; display: flex; background: #f1f1f1; border-bottom: 2px solid #dedede; }
.workspace {
  width: 166px; height: 92px; margin: 16px 0 0 17px;
  display: flex; align-items: center; justify-content: center; gap: 8px;
  border: 2px solid #dfdfdf; border-radius: 6px;
  font-weight: bold; font-size: 15px; letter-spacing: -.2px;
}
.workspace .caret { width: 9px; height: 7px; }
.workspace .tall, .workspace .caret { margin-top: -2px; }
.ribbon-main { margin-left: 25px; }
.tabs { display: flex; height: 37px; gap: 34px; }
.tab { width: 81px; padding-top: 8px; text-align: center; letter-spacing: -.15px; }
.tab.active { color: #0696d7; border-bottom: 5px solid #0696d7; }
.t-surface { width: 108px; }
.t-mesh { width: 76px; }
.t-sheet { width: 135px; }
.t-tools { width: 86px; }
.groups { display: flex; height: 82px; padding-top: 2px; }
.group { height: 78px; border-right: 2px solid #e0e0e0; display: flex; flex-direction: column; align-items: center; }
.group:last-child { border: 0; }
.tools { height: 57px; display: flex; gap: 16.400px; padding-top: 1px; }
.tool { width: 48px; height: 48px; }
.label { display: flex; align-items: center; gap: 5px; height: 23px; margin-top: 4px; letter-spacing: -.2px; }
.label .caret { width: 9px; height: 7px; margin-top: -2px; }
.g-create { width: 384px; padding-right: 20px; }
.g-create .tools { margin-right: -5px; }
.g-modify { width: 403px; padding-right: 7px; }
.g-modify .tools { gap: 16.800px; margin-right: -10px; }
.g-assemble { width: 146px; }
.g-assemble .tools { gap: 17.500px; margin-right: -2px; }
.g-construct { width: 148px; }
.g-construct .tools { margin-left: 2px; }
.g-inspect { width: 119px; }
.g-insert { width: 103px; padding-left: 2px; }
.g-insert .tools { margin-right: 1px; }
.g-select { width: 112px; }
.tool.select { width: 57px; height: 57px; margin-top: -5px; }

/* canvas */
.viewport { position: relative; height: 740px; flex: none; }
.model { position: absolute; left: 1140px; top: 254px; }
.viewcube { position: absolute; left: 1795px; top: 19px; }
.cube-top { font: bold 11.500px "Liberation Sans", sans-serif; fill: #979a9d; }
.cube-front { font: bold 8px "Liberation Sans", sans-serif; fill: #94979a; }
.cube-right { font: bold 6.500px "Liberation Sans", sans-serif; fill: #9b9ea1; }
.axis-z { font: 14px "Liberation Sans", sans-serif; fill: #8d8af5; stroke: #8d8af5; stroke-width: .6px; }
.axis-x { font: 13px "Liberation Sans", sans-serif; fill: #f29a9a; stroke: #f29a9a; stroke-width: .6px; }
.side { position: relative; width: 456px; height: 733px; padding: 6px 0 0 6px; display: flex; flex-direction: column; }
.panel { height: 37px; flex: none; display: flex; align-items: center; padding: 0 2px 0 7px; background: #f1f1f1; border: 1.500px solid #c6c6c6; }
.panel-title { margin: -1px 0 0 14px; font-size: 15.200px; letter-spacing: -.25px; color: #666; }
.panel-minus { margin-left: auto; }
.grip { margin-left: 9px; }
.comments { margin-top: auto; border-top: 0; padding-left: 22px; }
.comments .panel-title { margin-top: 0; }
.tree { padding-top: 6px; font-size: 16px; }
.row { height: 36px; display: flex; align-items: center; }
.node { height: 30px; display: flex; align-items: center; padding-left: 4px; background: #f1f1f1; }
.node > span { margin-left: 21px; letter-spacing: -.05px; }
.second { margin-left: 14px; }
.r1 { padding-left: 25px; }
.r2 { padding-left: 53px; }
.r6 { padding-left: 52px; }
.r7 { padding-left: 108px; }
.root { width: 360px; margin-left: 11px; }
.selected { width: 285px; height: 24px; margin: 0 6px 0 9px; padding-left: 5px; display: flex; align-items: center; background: #999; color: #fff; font-weight: bold; }
.selected span { margin-left: 20px; letter-spacing: .63px; }
.n-doc, .n-views, .n-origin, .n-bodies { margin-left: 12px; }
.n-doc { width: 201px; }
.n-views { width: 165px; }
.n-views > span { letter-spacing: .2px; }
.n-origin { width: 142px; }
.n-bodies { width: 154px; }
.n-sketches { width: 172px; margin-left: 11px; }
.n-sketch { width: 160px; }

.navbar { position: absolute; left: 782px; top: 697px; width: 356px; height: 36px; padding-left: 4px; display: flex; align-items: center; background: #f1f1f1; }
.navbar .caret { width: 9px; height: 7px; }
.c-orbit { margin-left: 8px; }
.i-look { margin-left: 9px; }
.i-hand { margin-left: 15px; }
.i-zoom { margin-left: 14px; }
.i-fit { margin-left: 14px; }
.c-fit { margin-left: 7px; }
.i-display { margin-left: 9px; }
.c-display { margin-left: 3px; }
.i-grid { margin-left: 10px; }
.c-grid { margin-left: 4px; }
.i-views { margin-left: 10px; margin-top: -2px; }
.c-views { margin-left: 4px; }

.tooltip {
  position: absolute; left: 239px; top: 636px; width: 222px; height: 83px; padding: 0 11px;
  background: #525252; border: 1px solid #6a6a6a; border-radius: 11px; color: #f2f2f2;
  font: 16.500px "Open Sans", "Noto Sans", sans-serif;
}
.tip-head { height: 47px; display: flex; align-items: center; gap: 13px; padding-left: 1px; border-bottom: 2px solid #777; letter-spacing: -.3px; }
.tip-head span { margin-top: 2px; }
.tip-body { line-height: 30px; letter-spacing: -.32px; }
.tip-arrow { position: absolute; left: 94px; top: 81px; }

/* timeline */
.timeline { height: 74px; flex: none; display: flex; align-items: flex-start; padding: 0 19px 0 16px; background: #f1f1f1; border-top: 3px solid #cbcbcb; }
.play { display: flex; gap: 17px; padding-top: 24px; }
.features { position: relative; display: flex; margin: 16px 0 0 29px; }
.feat { width: 36px; height: 36px; padding: 6px 0 0 6px; }
.current { background: #d9d9d9; border-radius: 3px; }
.links { position: absolute; left: 18px; top: 35px; }
.marker { position: absolute; left: 135px; top: -3px; }
.settings { margin: 24px 0 0 auto; }

/* taskbar */
.taskbar {
  height: 60px; flex: none; display: flex;
  background: linear-gradient(90deg, #202020 0, #222122 400px, #2a2929 480px, #424242 530px, #3d3d3d 575px, #212c36 635px, #343537 700px, #2a3140 750px, #25304b 820px, #2e3148 980px, #25304b 1060px, #28304d 1200px, #232b45 1350px, #1c2230 1590px, #23283b 1650px, #2d313a 1695px, #2a2a2c 1750px, #2b2422 1830px, #211f1b 1920px);
}
.sys { width: 72px; display: flex; align-items: center; justify-content: center; }
.app { position: relative; width: 75px; display: flex; align-items: center; justify-content: center; }
.sys + .app { margin-left: 4px; }
.app::after { content: ""; position: absolute; bottom: 0; left: 7px; right: 7px; height: 3px; }
.open::after { background: #62b865; }
.multi::after { background: linear-gradient(90deg, #62b865 0 47px, #3f7d45 47px 48px, #4e9455 48px); }
.focused { background: #565c6c; width: 73px; margin-left: 1px; }
.focused::after { left: 0; right: 0; }
.ai { width: 33px; height: 32px; margin-top: -2px; border-radius: 6px; background: #330000; color: #ff9a00; text-align: center; font: bold 18px/30px "Open Sans", sans-serif; }
.f360 { font: bold 7px "Liberation Sans", sans-serif; fill: #e38c3e; }
.clock { width: 105px; margin-left: auto; display: flex; flex-direction: column; align-items: center; padding-top: 2px; color: #fff; font: 17.500px/28px "Open Sans", "Noto Sans", sans-serif; }
```
